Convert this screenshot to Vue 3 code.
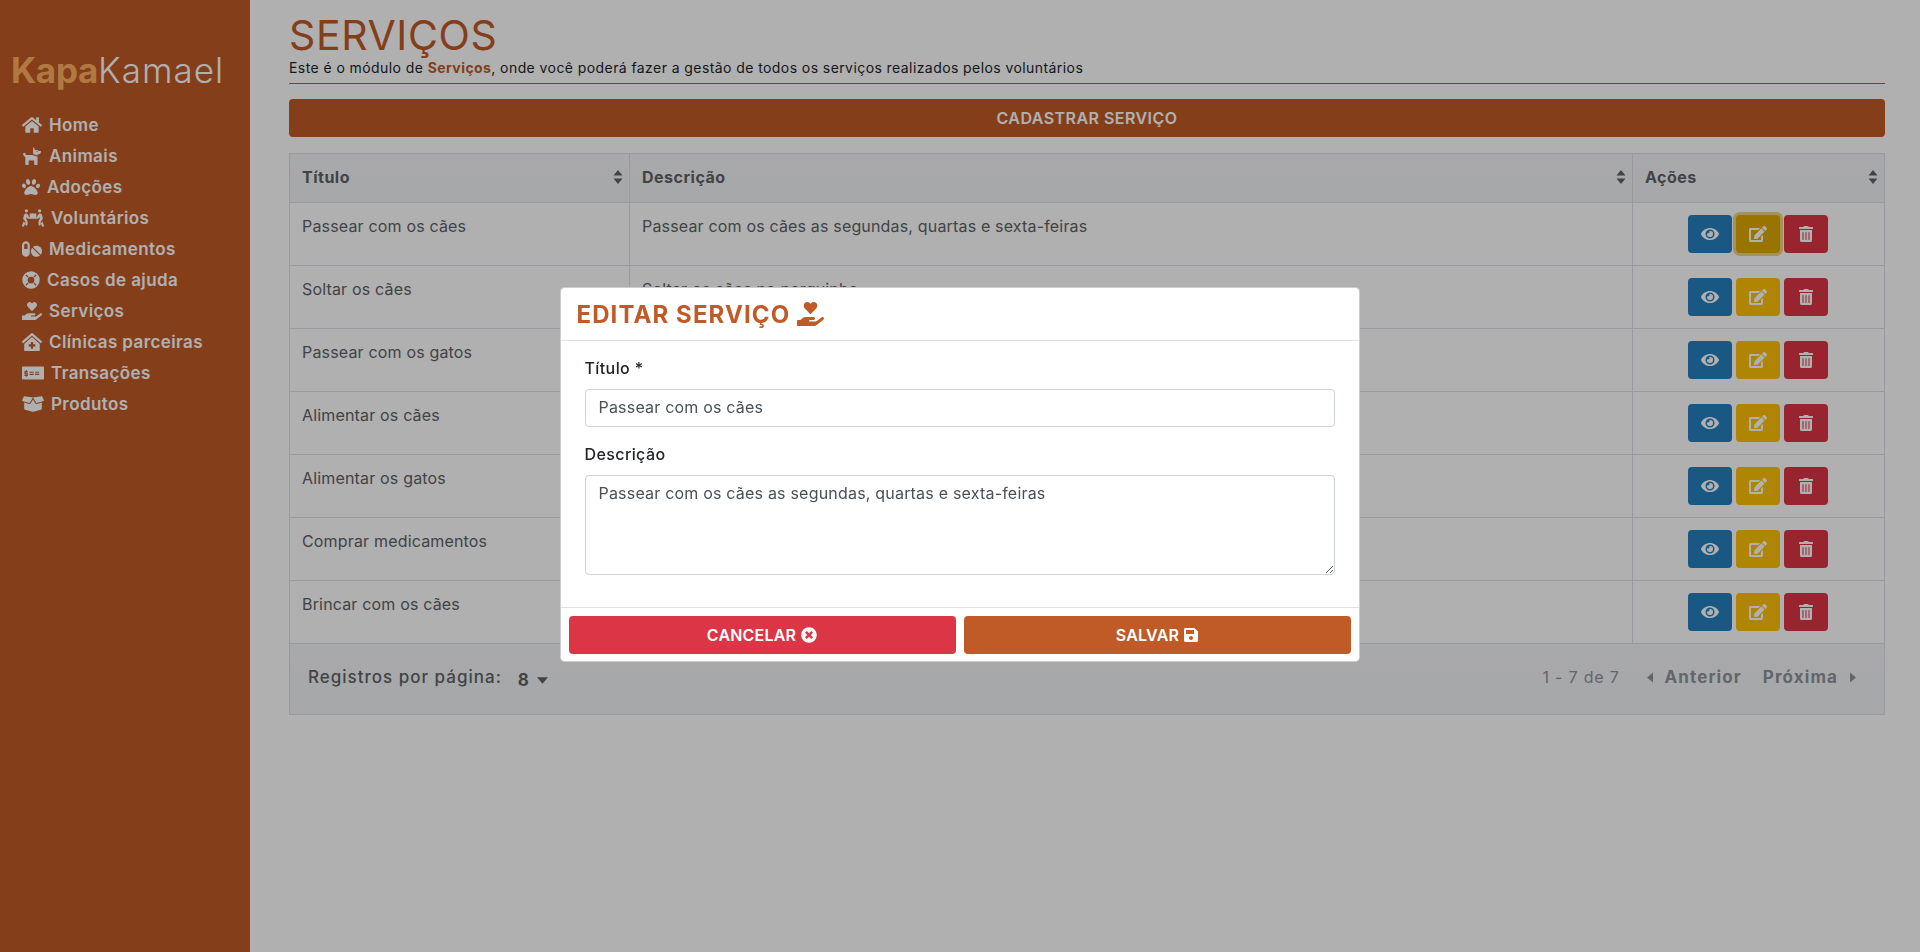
<template>
  <div class="page">
    <aside class="sidebar">
      <div class="logo"><b>Kapa</b>Kamael</div>
      <nav class="menu">
        <a v-for="item in menu" :key="item.label" class="menu-item">
          <svg class="menu-icon" :viewBox="item.box" :style="{ width: item.w + 'px' }"><path :d="icons[item.icon]" :fill-rule="item.rule || 'nonzero'" /></svg>
          <span>{{ item.label }}</span>
        </a>
      </nav>
    </aside>

    <main class="content">
      <h1 class="title">SERVIÇOS</h1>
      <p class="subtitle">Este é o módulo de <strong>Serviços</strong>, onde você poderá fazer a gestão de todos os serviços realizados pelos voluntários</p>
      <hr class="rule" />
      <button class="new-btn">CADASTRAR SERVIÇO</button>

      <div class="table-wrap">
        <div class="row head">
          <div class="cell" v-for="h in ['Título', 'Descrição', 'Ações']" :key="h">
            {{ h }}
            <svg class="sort" viewBox="0 0 10 14"><path d="M5 0l4.5 5.5h-9zM5 14L.5 8.5h9z" /></svg>
          </div>
        </div>
        <div class="row" v-for="(s, i) in services" :key="s.title">
          <div class="cell">{{ s.title }}</div>
          <div class="cell">{{ s.desc }}</div>
          <div class="cell actions">
            <button class="act blue"><svg viewBox="0 0 576 512"><path :d="icons.eye" /></svg></button>
            <button :class="['act', 'yellow', { focused: i === 0 }]"><svg viewBox="0 0 576 512"><path :d="icons.edit" /></svg></button>
            <button class="act red"><svg viewBox="0 0 448 512"><path :d="icons.trash" /></svg></button>
          </div>
        </div>
        <div class="table-footer">
          <div class="per-page">
            <span>Registros por página:</span>
            <b>8</b>
            <svg class="caret" viewBox="0 0 10 6"><path d="M0 0h10L5 6z" /></svg>
          </div>
          <div class="pager">
            <span class="info">1 - 7 de 7</span>
            <span class="nav"><svg class="arrow" viewBox="0 0 6 10"><path d="M6 0v10L0 5z" /></svg>Anterior</span>
            <span class="nav">Próxima<svg class="arrow" viewBox="0 0 6 10"><path d="M0 0v10l6-5z" /></svg></span>
          </div>
        </div>
      </div>
    </main>

    <div class="backdrop"></div>

    <div class="modal-wrap">
      <div class="modal">
        <div class="modal-head">
          <h2>EDITAR SERVIÇO</h2>
          <svg class="head-icon" viewBox="0 0 576 512"><path :d="icons.hand" /></svg>
        </div>
        <div class="modal-body">
          <label>Título *</label>
          <input type="text" value="Passear com os cães" />
          <label>Descrição</label>
          <textarea>Passear com os cães as segundas, quartas e sexta-feiras</textarea>
        </div>
        <div class="modal-foot">
          <button class="foot-btn cancel">CANCELAR <svg viewBox="0 0 512 512"><path :d="icons.times" /></svg></button>
          <button class="foot-btn save">SALVAR <svg viewBox="0 0 448 512"><path :d="icons.save" /></svg></button>
        </div>
      </div>
    </div>
  </div>
</template>

<script setup>
const icons = {
  home: 'M280.37 148.26L96 300.11V464a16 16 0 0 0 16 16l112.06-.29a16 16 0 0 0 15.92-16V368a16 16 0 0 1 16-16h64a16 16 0 0 1 16 16v95.64a16 16 0 0 0 16 16.05L464 480a16 16 0 0 0 16-16V300L295.67 148.26a12.19 12.19 0 0 0-15.3 0zM571.6 251.47L488 182.56V44.05a12 12 0 0 0-12-12h-56a12 12 0 0 0-12 12v72.61L318.47 43a48 48 0 0 0-61 0L4.34 251.47a12 12 0 0 0-1.6 16.9l25.5 31A12 12 0 0 0 45.15 301l235.22-193.74a12.19 12.19 0 0 1 15.3 0L530.9 301a12 12 0 0 0 16.9-1.6l25.5-31a12 12 0 0 0-1.7-16.93z',
  dog: 'M298.06 224L448 277.55V496a16 16 0 0 1-16 16H368a16 16 0 0 1-16-16V384H192V496a16 16 0 0 1-16 16H112a16 16 0 0 1-16-16V282.09C58.84 268.84 32 233.66 32 192a32 32 0 1 1 64 0 32.06 32.06 0 0 0 32 32zM544 112H480l-7.16-14.31A32 32 0 0 0 444.22 80H373.34L346.06 11.8A16 16 0 0 0 320 16.84V195.12l128 45.71V208h32a64 64 0 0 0 64-64V128A16 16 0 0 0 544 112zM432 144a16 16 0 1 1 16-16 16 16 0 0 1-16 16z',
  paw: 'M256 224c-79.41 0-192 122.76-192 200.25 0 34.9 26.81 55.75 71.74 55.75 48.84 0 81.09-25.08 120.26-25.08 39.51 0 71.85 25.08 120.26 25.08 44.93 0 71.74-20.85 71.74-55.75C448 346.76 335.41 224 256 224zm-147.28-12.61c-10.4-34.65-42.44-57.09-71.56-50.13-29.12 6.96-44.29 40.69-33.89 75.34 10.4 34.65 42.44 57.09 71.56 50.13 29.12-6.96 44.29-40.69 33.89-75.34zm84.72-20.78c30.94-8.14 46.42-49.94 34.58-93.36s-46.52-72.01-77.46-63.87-46.42 49.94-34.58 93.36c11.84 43.42 46.52 72.02 77.46 63.87zm281.39-29.34c-29.12-6.96-61.15 15.48-71.56 50.13-10.4 34.65 4.77 68.38 33.89 75.34 29.12 6.96 61.15-15.48 71.56-50.13 10.4-34.65-4.77-68.38-33.89-75.34zm-156.27 29.34c30.94 8.14 65.62-20.45 77.46-63.87 11.84-43.42-3.64-85.21-34.58-93.36s-65.62 20.45-77.46 63.87c-11.84 43.42 3.64 85.22 34.58 93.36z',
  people: 'M128 96a48 48 0 1 0 0-96 48 48 0 0 0 0 96zm384 0a48 48 0 1 0 0-96 48 48 0 0 0 0 96zM224 128H416V240H432L448 196c5-25 20-47 42-60 18-10 39-11 57-3 19 8 33 25 38 45L603.5 258c3 14 0 29-10 41L544 359V448a32 32 0 0 1-64 0V361c0-12 3-23 9-33L522 274 510 220 503 244c-3 12-11 22-22 27-6 3-12 4-18 4H177c-6 0-12-1-18-4-11-5-19-15-22-27L130 220 118 274 151 328c6 10 9 21 9 33V448a32 32 0 0 1-64 0V359L46 299c-10-12-13-27-10-41L55 178c5-20 19-37 38-45 18-8 39-7 57 3 22 13 37 35 42 60L208 240H224zM637.7 468.1l-44-110-41.1 46.4-2 18.2 27.7 69.2c5 12.5 17 20.1 29.7 20.1 4 0 8-.7 11.9-2.3 16.4-6.6 24.4-25.2 17.8-41.6zM2.3 468.1l44-110 41.1 46.4 2 18.2-27.7 69.2c-5 12.5-17 20.1-29.7 20.1-4 0-8-.7-11.9-2.3-16.4-6.6-24.4-25.2-17.8-41.6z',
  pills: 'M112 32C50.1 32 0 82.1 0 144v224c0 61.9 50.1 112 112 112s112-50.1 112-112V144c0-61.9-50.1-112-112-112zm48 224H64V144c0-26.5 21.5-48 48-48s48 21.5 48 48v112zm139.7-29.7c-3.5-3.5-9.4-3.1-12.3.8-45.3 62.5-40.4 150.1 15.9 206.4 56.3 56.3 143.9 61.2 206.4 15.9 4-2.9 4.3-8.8.8-12.3L299.7 226.3zm229.8-19c-56.3-56.3-143.9-61.2-206.4-15.9-4 2.9-4.3 8.8-.8 12.3l210.8 210.8c3.5 3.5 9.4 3.1 12.3-.8 45.3-62.6 40.5-150.1-15.9-206.4z',
  ring: 'M256 8a248 248 0 1 0 0 496 248 248 0 0 0 0-496zM256 160a96 96 0 1 1 0 192 96 96 0 0 1 0-192zM96 122L122 96 188 162 162 188zM390 96L416 122 350 188 324 162zM96 390L162 324 188 350 122 416zM350 324L416 390 390 416 324 350z',
  hand: 'M275.3 250.5c7 7.4 18.4 7.4 25.5 0l108.9-114.2c31.6-33.2 29.8-88.2-5.6-118.8-30.8-26.7-76.7-21.9-104.9 7.7L288 36.9l-11.1-11.6C248.7-4.4 202.8-9.2 172 17.5c-35.3 30.6-37.2 85.6-5.6 118.8l108.9 114.2zm290 77.6c-11.8-10.7-30.2-10-42.6 0L430.3 402c-11.3 9.1-25.4 14-40 14H272c-8.8 0-16-7.2-16-16s7.2-16 16-16h78.3c15.9 0 30.7-10.9 33.3-26.6 3.3-20-12.1-37.4-31.6-37.4H192c-27 0-53.1 9.3-74.1 26.3L71.4 384H16c-8.8 0-16 7.2-16 16v96c0 8.8 7.2 16 16 16h356.8c14.5 0 28.6-4.9 40-14l151.2-121c15.2-12.2 16.4-35.1 1.3-48.9z',
  clinic: 'M288 115L69.47 307.71c-1.62 1.46-3.69 2.14-5.47 3.35V496a16 16 0 0 0 16 16h416a16 16 0 0 0 16-16V311.1c-1.7-1.16-3.72-1.82-5.26-3.2zm96 261a8 8 0 0 1-8 8h-56v56a8 8 0 0 1-8 8h-48a8 8 0 0 1-8-8v-56h-56a8 8 0 0 1-8-8v-48a8 8 0 0 1 8-8h56v-56a8 8 0 0 1 8-8h48a8 8 0 0 1 8 8v56h56a8 8 0 0 1 8 8zm186.69-139.72l-255.94-226a39.85 39.85 0 0 0-53.45 0l-256 226a16 16 0 0 0-1.21 22.6L25.5 282.7a16 16 0 0 0 22.6 1.21L277.42 81.63a16 16 0 0 1 21.17 0L527.91 283.9a16 16 0 0 0 22.6-1.21l21.4-23.82a16 16 0 0 0-1.22-22.59z',
  money: 'M24 64H616A24 24 0 0 1 640 88V424A24 24 0 0 1 616 448H24A24 24 0 0 1 0 424V88A24 24 0 0 1 24 64zM220 216V248H340V216zM380 216V248H500V216zM220 280V312H340V280zM380 280V312H500V280zM140 170H112V196H72V290H130V308H72V342H112V366H140V342H170V260H112V240H170V206H140z',
  box: 'M425.7 256c-16.9 0-32.8-9-41.4-23.4L320 126l-64.2 106.6c-8.7 14.5-24.6 23.5-41.5 23.5-4.5 0-9-.6-13.3-1.9L64 215v178c0 14.7 10 27.5 24.2 31l216.2 54.1c10.2 2.5 20.9 2.5 31 0L551.8 424c14.2-3.6 24.2-16.4 24.2-31V215l-137 39.1c-4.3 1.3-8.8 1.9-13.3 1.9zm212.6-112.2L586.8 41c-3.1-6.2-9.8-9.8-16.7-8.9L320 64l91.7 152.1c3.8 6.3 11.4 9.3 18.5 7.3l197.9-56.5c9.9-2.9 14.7-13.9 10.2-23.1zM53.2 41L1.7 143.8c-4.6 9.2.3 20.2 10.1 23l197.9 56.5c7.1 2 14.7-1 18.5-7.3L320 64 69.8 32.1c-6.9-.8-13.5 2.7-16.6 8.9z',
  eye: 'M572.52 241.4C518.29 135.59 410.93 64 288 64S57.68 135.64 3.48 241.41a32.35 32.35 0 0 0 0 29.19C57.71 376.41 165.07 448 288 448s230.32-71.64 284.52-177.41a32.35 32.35 0 0 0 0-29.19zM288 400a144 144 0 1 1 144-144 143.93 143.93 0 0 1-144 144zm0-240a95.31 95.31 0 0 0-25.31 3.79 47.85 47.85 0 0 1-66.9 66.9A95.78 95.78 0 1 0 288 160z',
  edit: 'M402.6 83.2l90.2 90.2c3.8 3.8 3.8 10 0 13.8L274.4 405.6l-92.8 10.3c-12.4 1.4-22.9-9.1-21.5-21.5l10.3-92.8L388.8 83.2c3.8-3.8 10-3.8 13.8 0zm162-22.9l-48.8-48.8c-15.2-15.2-39.9-15.2-55.2 0l-35.4 35.4c-3.8 3.8-3.8 10 0 13.8l90.2 90.2c3.8 3.8 10 3.8 13.8 0l35.4-35.4c15.2-15.3 15.2-40 0-55.2zM384 346.2V448H64V128h229.8c3.2 0 6.2-1.3 8.5-3.5l40-40c7.6-7.6 2.2-20.5-8.5-20.5H48C21.5 64 0 85.5 0 112v352c0 26.5 21.5 48 48 48h352c26.5 0 48-21.5 48-48V306.2c0-10.7-12.9-16-20.5-8.5l-40 40c-2.2 2.3-3.5 5.3-3.5 8.5z',
  trash: 'M32 464a48 48 0 0 0 48 48h288a48 48 0 0 0 48-48V128H32zm272-256a16 16 0 0 1 32 0v224a16 16 0 0 1-32 0zm-96 0a16 16 0 0 1 32 0v224a16 16 0 0 1-32 0zm-96 0a16 16 0 0 1 32 0v224a16 16 0 0 1-32 0zM432 32H312l-9.4-18.7A24 24 0 0 0 281.1 0H166.8a23.72 23.72 0 0 0-21.4 13.3L136 32H16A16 16 0 0 0 0 48v32a16 16 0 0 0 16 16h416a16 16 0 0 0 16-16V48a16 16 0 0 0-16-16z',
  times: 'M256 8C119 8 8 119 8 256s111 248 248 248 248-111 248-248S393 8 256 8zm121.6 313.1c4.7 4.7 4.7 12.3 0 17L338 377.6c-4.7 4.7-12.3 4.7-17 0L256 312l-65.1 65.6c-4.7 4.7-12.3 4.7-17 0L134.4 338c-4.7-4.7-4.7-12.3 0-17l65.6-65-65.6-65.1c-4.7-4.7-4.7-12.3 0-17l39.6-39.6c4.7-4.7 12.3-4.7 17 0l65 65.7 65.1-65.6c4.7-4.7 12.3-4.7 17 0l39.6 39.6c4.7 4.7 4.7 12.3 0 17L312 256l65.6 65.1z',
  save: 'M433.941 129.941l-83.882-83.882A48 48 0 0 0 316.118 32H48C21.49 32 0 53.49 0 80v352c0 26.51 21.49 48 48 48h352c26.51 0 48-21.49 48-48V163.882a48 48 0 0 0-14.059-33.941zM224 416c-35.346 0-64-28.654-64-64 0-35.346 28.654-64 64-64s64 28.654 64 64c0 35.346-28.654 64-64 64zm96-304.52V212c0 6.627-5.373 12-12 12H76c-6.627 0-12-5.373-12-12V108c0-6.627 5.373-12 12-12h228.52c3.183 0 6.235 1.264 8.485 3.515l3.48 3.48A11.996 11.996 0 0 1 320 111.48z'
}

const menu = [
  { label: 'Home', icon: 'home', box: '0 0 576 512', w: 20 },
  { label: 'Animais', icon: 'dog', box: '0 0 576 512', w: 20 },
  { label: 'Adoções', icon: 'paw', box: '0 0 512 512', w: 18 },
  { label: 'Voluntários', icon: 'people', box: '0 0 640 512', w: 22 },
  { label: 'Medicamentos', icon: 'pills', box: '0 0 576 512', w: 20 },
  { label: 'Casos de ajuda', icon: 'ring', box: '0 0 512 512', w: 18, rule: 'evenodd' },
  { label: 'Serviços', icon: 'hand', box: '0 0 576 512', w: 20 },
  { label: 'Clínicas parceiras', icon: 'clinic', box: '0 0 576 512', w: 20 },
  { label: 'Transações', icon: 'money', box: '0 0 640 512', w: 22, rule: 'evenodd' },
  { label: 'Produtos', icon: 'box', box: '0 0 640 512', w: 22 }
]

const services = [
  { title: 'Passear com os cães', desc: 'Passear com os cães as segundas, quartas e sexta-feiras' },
  { title: 'Soltar os cães', desc: 'Soltar os cães no parquinho' },
  { title: 'Passear com os gatos', desc: 'Passear com os gatos' },
  { title: 'Alimentar os cães', desc: 'Alimentar os cães' },
  { title: 'Alimentar os gatos', desc: 'Alimentar os gatos' },
  { title: 'Comprar medicamentos', desc: 'Comprar medicamentos' },
  { title: 'Brincar com os cães', desc: 'Brincar com os cães' }
]
</script>

<style>
html, body { margin: 0; background: #fff; overflow: hidden; }
</style>

<style scoped>
.page {
  display: flex;
  height: 952px;
  font-family: Inter, "Open Sans", sans-serif;
  color: #212529;
  background: #fff;
}

/* Sidebar */
.sidebar {
  width: 250px;
  flex-shrink: 0;
  background: #c05a26;
  padding-top: 50px;
  box-sizing: border-box;
}

.logo {
  font-size: 35px;
  font-weight: 300;
  color: #fff;
  padding-left: 11px;
  line-height: 40px;
  letter-spacing: 1px;
}

.logo b {
  color: #ffb060;
  font-weight: 700;
  letter-spacing: -0.3px;
}

.menu {
  margin-top: 19px;
  display: flex;
  flex-direction: column;
  padding-left: 22px;
}

.menu-item {
  display: flex;
  align-items: center;
  gap: 7px;
  height: 31px;
  font-size: 17px;
  font-weight: 600;
  color: #fff;
  letter-spacing: 0.4px;
}

.menu-icon {
  height: 18px;
  fill: #fff;
  flex-shrink: 0;
}

/* Content */
.content {
  flex: 1;
  padding: 12px 35px 0 39px;
  min-width: 0;
}

.title {
  margin: 0;
  font-size: 41px;
  font-weight: 400;
  line-height: 46px;
  color: #c05a26;
  letter-spacing: 0.6px;
}

.subtitle {
  margin: 0;
  font-size: 14px;
  line-height: 20px;
  letter-spacing: 0.42px;
}

.subtitle strong {
  color: #c05a26;
}

.rule {
  margin: 5px 0 0;
  border: 0;
  border-top: 1px solid #c05a26;
}

.new-btn {
  display: block;
  width: 100%;
  height: 38px;
  margin-top: 15px;
  border: 0;
  border-radius: 4px;
  background: #c05a26;
  color: #fff;
  font: 600 16px Inter, sans-serif;
  letter-spacing: 0.45px;
}

.table-wrap {
  margin-top: 16px;
  border: 1px solid #dcdfe6;
  font-size: 16px;
  color: #606266;
}

.row {
  display: grid;
  grid-template-columns: 340px 1003px 1fr;
  height: 63px;
  border-bottom: 1px solid #dcdfe6;
  box-sizing: border-box;
}

.row.head {
  height: 49px;
  background: linear-gradient(#f4f5f8, #f1f3f6);
  font-weight: 700;
}

.cell {
  padding: 13px 12px 0;
  border-right: 1px solid #dcdfe6;
  letter-spacing: 0.17px;
  min-width: 0;
  white-space: nowrap;
}

.cell:last-child {
  border-right: 0;
}

.head .cell {
  display: flex;
  align-items: center;
  justify-content: space-between;
  padding: 0 6px 2px 12px;
  letter-spacing: 0.5px;
}

.sort {
  width: 10px;
  height: 14px;
  fill: #606266;
}

.actions {
  display: flex;
  justify-content: center;
  gap: 4px;
  padding: 12px 14px 0 12px;
}

.act {
  width: 44px;
  height: 38px;
  border: 0;
  border-radius: 4px;
  display: flex;
  align-items: center;
  justify-content: center;
  padding: 0;
}

.act svg {
  height: 16px;
  fill: #fff;
}

.blue { background: #2480bd; }
.yellow { background: #ffc107; }
.red { background: #dc3545; }

.yellow.focused {
  background: #e0a800;
  box-shadow: 0 0 0 3px rgba(222, 170, 12, 0.5);
}

.table-footer {
  display: flex;
  justify-content: space-between;
  align-items: center;
  height: 70px;
  padding: 0 28px 4px 18px;
  box-sizing: border-box;
  background: linear-gradient(#f4f5f8, #f1f3f6);
}

.per-page {
  display: flex;
  align-items: center;
  font-size: 17px;
  font-weight: 500;
  letter-spacing: 1px;
}

.per-page b {
  margin-left: 16px;
  margin-top: 6px;
  font-weight: 700;
}

.caret {
  width: 11px;
  height: 7px;
  margin: 6px 0 0 7px;
  fill: #606266;
}

.pager {
  display: flex;
  align-items: center;
  gap: 21px;
  font-size: 17px;
}

.info {
  color: #909399;
  font-size: 16px;
  letter-spacing: 0.8px;
  margin-right: 6px;
}

.nav {
  display: flex;
  align-items: center;
  gap: 12px;
  color: #909399;
  font-weight: 700;
  letter-spacing: 1.1px;
}

.arrow {
  width: 6px;
  height: 11px;
  fill: #909399;
}

/* Modal */
.backdrop {
  position: fixed;
  inset: 0;
  background: rgba(0, 0, 0, 0.31);
}

.modal-wrap {
  position: fixed;
  inset: 287px 0 auto 0;
  display: flex;
  justify-content: center;
}

.modal {
  width: 800px;
  height: 375px;
  margin-left: -1px;
  background: #fff;
  border: 1px solid rgba(0, 0, 0, 0.2);
  border-radius: 4.8px;
  box-sizing: border-box;
  display: flex;
  flex-direction: column;
}

.modal-head {
  display: flex;
  align-items: center;
  gap: 7px;
  height: 52px;
  padding: 0 16px;
  border-bottom: 1px solid #dee2e6;
  flex-shrink: 0;
}

.modal-head h2 {
  margin: 0;
  font-size: 24px;
  font-weight: 700;
  color: #c05a26;
  letter-spacing: 1.1px;
}

.head-icon {
  height: 24px;
  width: 27px;
  fill: #c05a26;
}

.modal-body {
  flex: 1;
  padding: 15px 24px 0;
  display: flex;
  flex-direction: column;
}

.modal-body label {
  font-size: 16px;
  font-weight: 500;
  line-height: 24px;
  margin-bottom: 9px;
  letter-spacing: 0.4px;
}

.modal-body input,
.modal-body textarea {
  box-sizing: border-box;
  width: 100%;
  border: 1px solid #ced4da;
  border-radius: 4px;
  padding: 5px 13px 7px;
  font: 400 16px Inter, sans-serif;
  letter-spacing: 0.2px;
  color: #495057;
  line-height: 24px;
}

.modal-body input {
  height: 38px;
  margin-bottom: 15px;
}

.modal-body textarea {
  height: 100px;
}

.modal-foot {
  display: grid;
  grid-template-columns: 1fr 1fr;
  gap: 8px;
  padding: 8px 8px 7px;
  border-top: 1px solid #dee2e6;
}

.foot-btn {
  height: 38px;
  border: 0;
  border-radius: 4px;
  color: #fff;
  font: 600 16px Inter, sans-serif;
  letter-spacing: 0.2px;
  display: flex;
  align-items: center;
  justify-content: center;
  gap: 5px;
}

.foot-btn svg {
  height: 16px;
  fill: #fff;
}

.cancel { background: #dc3545; }
.save { background: #c05a26; }
</style>
